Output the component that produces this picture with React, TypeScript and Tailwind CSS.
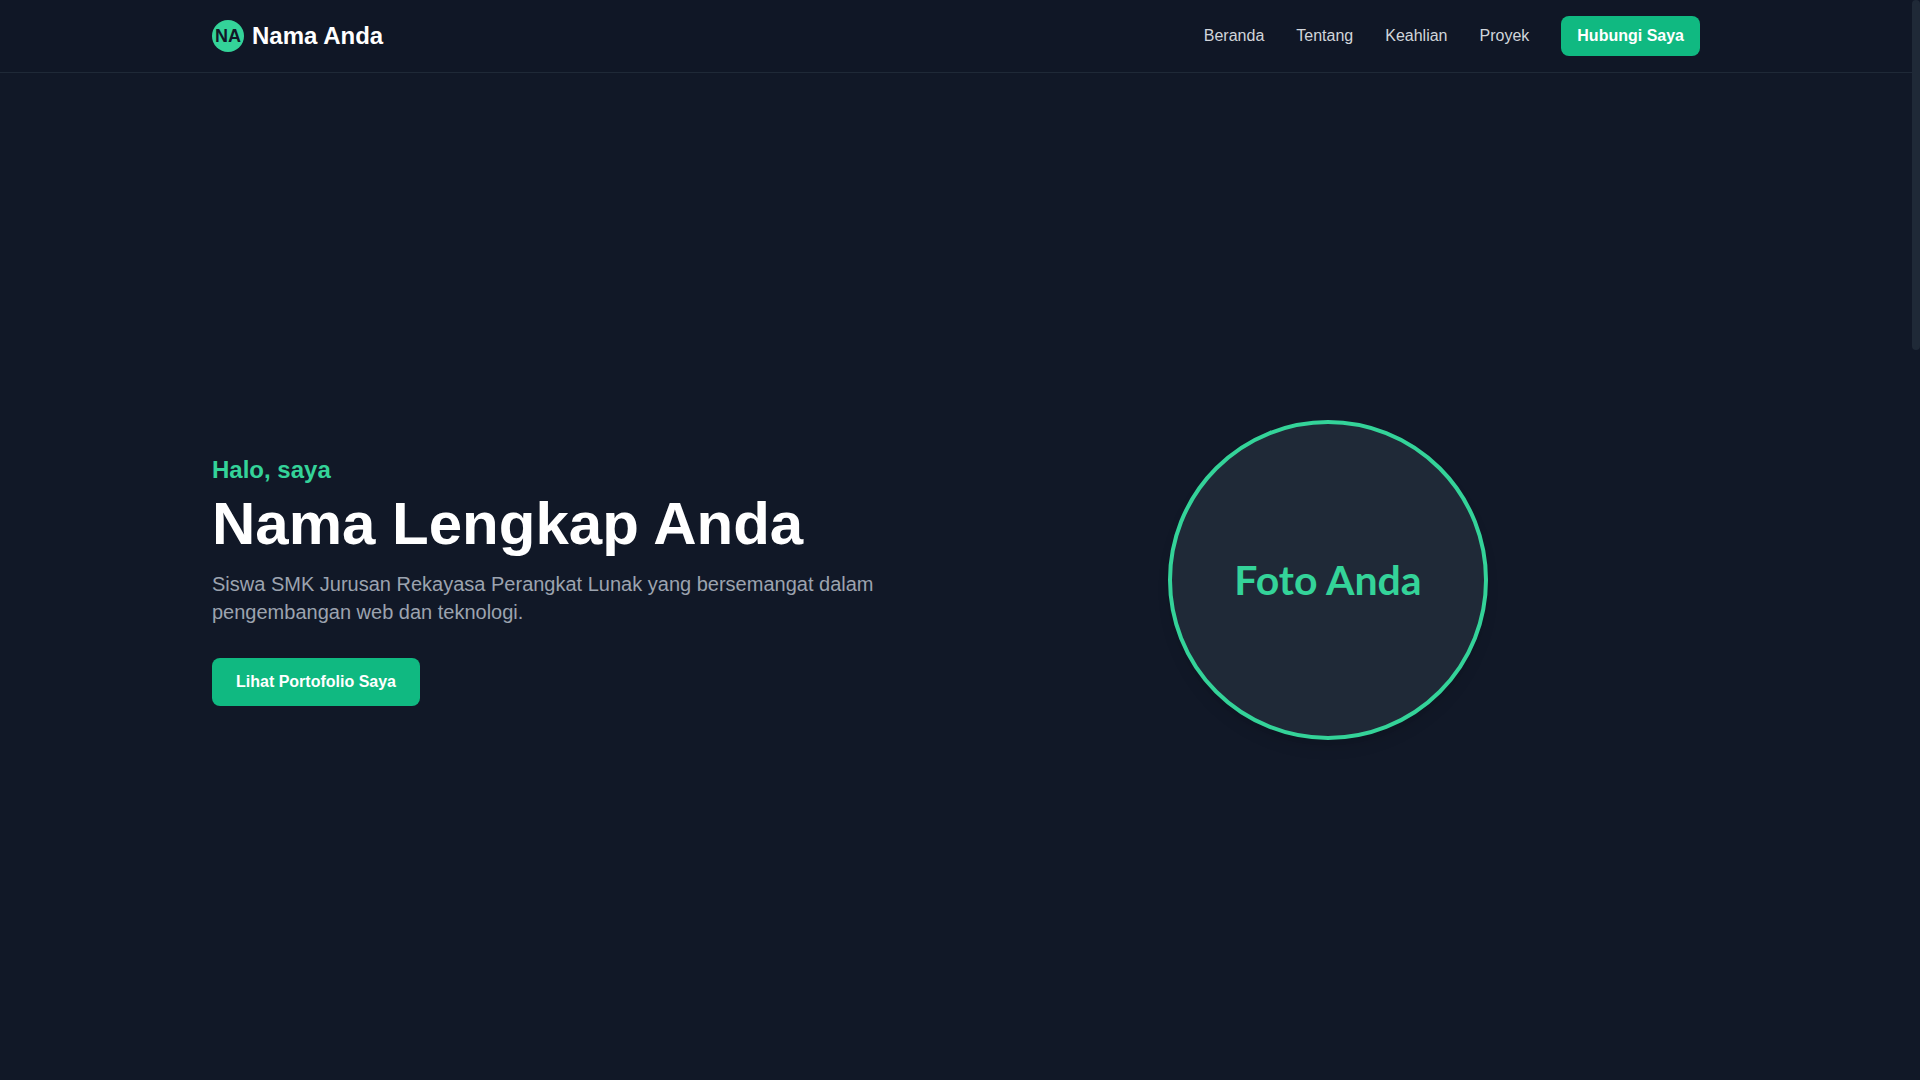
import React from 'react';

const navLinks = [
  { label: 'Beranda', href: '#beranda' },
  { label: 'Tentang', href: '#tentang' },
  { label: 'Keahlian', href: '#keahlian' },
  { label: 'Proyek', href: '#proyek' },
];

function Header() {
  return (
    <header className="fixed top-0 right-2 left-0 z-50 border-b border-[#1f2937] bg-[#101726]">
      <div className="container mx-auto flex items-center justify-between px-6 py-4">
        <a href="#beranda" className="flex items-center gap-2 text-2xl font-bold text-white">
          <svg className="h-8 w-8" viewBox="0 0 32 32" aria-hidden="true">
            <circle cx="16" cy="16" r="16" fill="#34d399" />
            <text x="16" y="22" textAnchor="middle" fontSize="18" fontWeight="bold" fill="#111827">
              NA
            </text>
          </svg>
          <span>Nama Anda</span>
        </a>
        <nav className="flex items-center gap-8">
          {navLinks.map((link) => (
            <a key={link.href} href={link.href} className="text-[#d1d5db] transition-colors hover:text-[#34d399]">
              {link.label}
            </a>
          ))}
          <a
            href="#kontak"
            className="rounded-lg bg-[#10b981] px-4 py-2 font-bold text-white transition-colors hover:bg-[#059669]"
          >
            Hubungi Saya
          </a>
        </nav>
      </div>
    </header>
  );
}

function Hero() {
  return (
    <section id="beranda" className="flex min-h-screen items-center pt-20">
      <div className="container mx-auto flex flex-col items-center px-6 md:flex-row">
        <div className="md:w-1/2">
          <h2 className="text-2xl font-bold text-[#34d399]">Halo, saya</h2>
          <h1 className="mt-2 mb-4 text-6xl font-bold text-white">Nama Lengkap Anda</h1>
          <p className="mb-8 text-xl text-[#9ca3af]">
            Siswa SMK Jurusan Rekayasa Perangkat Lunak yang bersemangat dalam pengembangan web dan teknologi.
          </p>
          <div className="flex">
            <a
              href="#proyek"
              className="rounded-lg bg-[#10b981] px-6 py-3 font-bold text-white transition-colors hover:bg-[#059669]"
            >
              Lihat Portofolio Saya
            </a>
          </div>
        </div>
        <div className="flex justify-center md:w-1/2">
          <div className="flex h-80 w-80 items-center justify-center rounded-full border-4 border-[#34d399] bg-[#1f2937] font-['Lato',sans-serif] text-[41px] font-bold text-[#34d399] shadow-lg">
            Foto Anda
          </div>
        </div>
      </div>
    </section>
  );
}

export default function App() {
  return (
    <div className="min-h-screen bg-[#111827] pr-2 font-['Liberation_Sans',sans-serif] text-[#d1d5db]">
      <Header />
      <main>
        <Hero />
      </main>
      {/* scroll track */}
      <div className="fixed inset-y-0 right-0 w-2 bg-[#111827]">
        <div className="h-[350px] rounded bg-[#1f2937]" />
      </div>
    </div>
  );
}
